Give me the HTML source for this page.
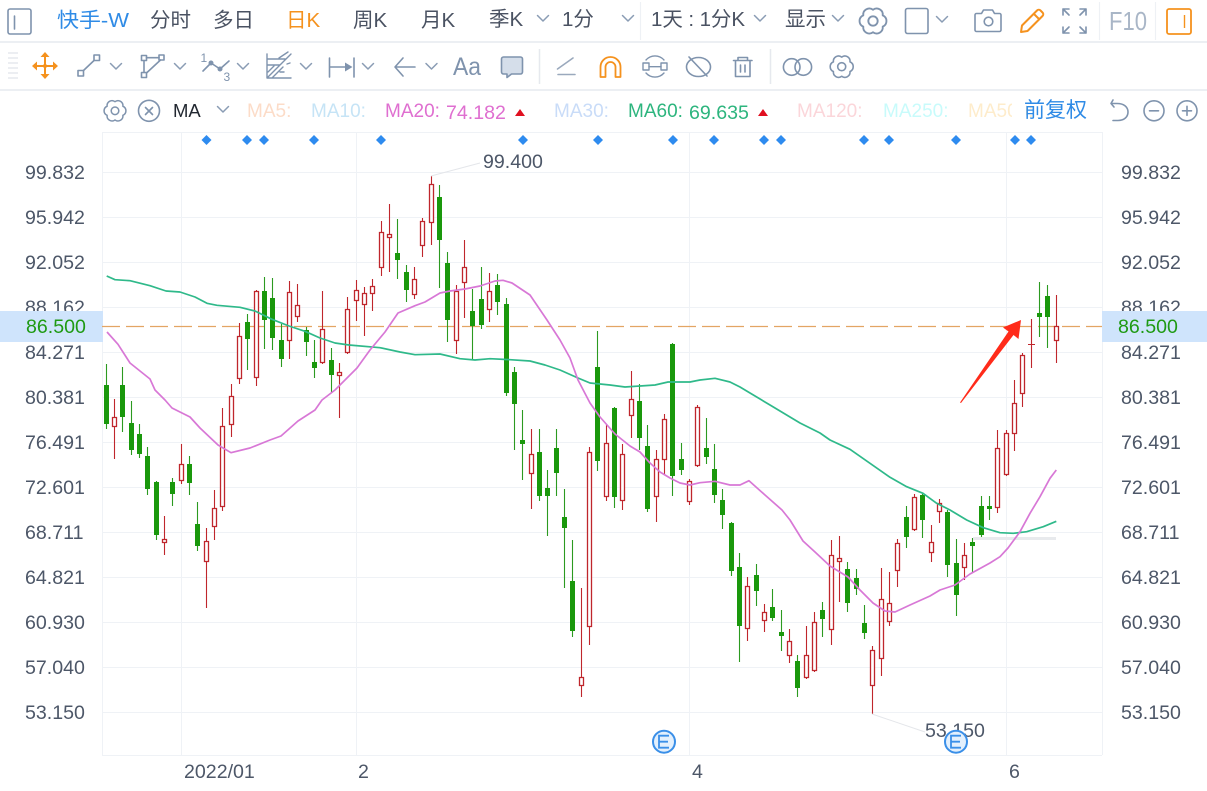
<!DOCTYPE html>
<html><head><meta charset="utf-8"><style>
html,body{margin:0;padding:0;background:#fff;width:1207px;height:791px;overflow:hidden}
svg{display:block;font-family:"Liberation Sans","Noto Sans CJK SC",sans-serif}
.i{fill:none;stroke:#7f93ad;stroke-width:1.6;stroke-linejoin:round;stroke-linecap:round}
.t{font-size:20.5px;fill:#4a5262}
.ax{font-size:19.6px;fill:#4d5768}
.ma{font-size:19px}
</style></head><body>
<svg width="1207" height="791" viewBox="0 0 1207 791" xmlns="http://www.w3.org/2000/svg">
<defs>
<path id="ch" d="M-5.5-2.5L0 3L5.5-2.5" fill="none" stroke="#8a9cb4" stroke-width="1.5" stroke-linecap="round" stroke-linejoin="round"/>
<g id="gear"><path d="M8.3-4.8A5.2 5.2 0 0 1 8.3 4.8A5.2 5.2 0 0 1 0 9.6A5.2 5.2 0 0 1-8.3 4.8A5.2 5.2 0 0 1-8.3-4.8A5.2 5.2 0 0 1 0-9.6A5.2 5.2 0 0 1 8.3-4.8Z"/><circle r="4"/></g>
<polygon id="dm" points="0,-5 5,0 0,5 -5,0" fill="#2e8bef"/>
<g id="ee"><circle r="11" fill="#e3f0fd" stroke="#3a8fe8" stroke-width="2"/><path d="M5-6H-5V6H5M-5 0H4" fill="none" stroke="#3a8fe8" stroke-width="1.8"/></g>
</defs>

<!-- top toolbar -->
<rect x="8" y="9" width="23" height="25" rx="2" class="i"/>
<path d="M14.5 16V29" class="i" stroke-width="1.2"/>
<text x="57" y="27" class="t" style="fill:#2f8be6" textLength="72" lengthAdjust="spacingAndGlyphs">快手-W</text>
<text x="150" y="27" class="t">分时</text>
<text x="213" y="27" class="t">多日</text>
<text x="286" y="27" class="t" style="fill:#f5921e">日K</text>
<text x="353" y="27" class="t">周K</text>
<text x="421" y="27" class="t">月K</text>
<text x="489" y="26" class="t">季K</text>
<use href="#ch" x="543" y="18"/>
<text x="562" y="26" class="t">1分</text>
<use href="#ch" x="628" y="18"/>
<path d="M640.5 2V40M1099.5 2V40M1155.5 2V40" stroke="#eef1f5" stroke-width="1.2"/>
<text x="651" y="26" class="t" textLength="94" lengthAdjust="spacing">1天 : 1分K</text>
<use href="#ch" x="760" y="18"/>
<text x="785" y="26" class="t">显示</text>
<use href="#ch" x="838" y="18"/>
<g class="i" transform="translate(873 21) scale(1.17)"><use href="#gear"/></g>
<rect x="905.5" y="8.5" width="22.5" height="25" rx="2" class="i"/>
<use href="#ch" x="942" y="19"/>
<path d="M976 13.5h5l2-3.5h9l2 3.5h5a1.5 1.5 0 0 1 1.5 1.5v15a1.5 1.5 0 0 1-1.5 1.5h-23a1.5 1.5 0 0 1-1.5-1.500v-15a1.5 1.5 0 0 1 1.5-1.500z" class="i" transform="translate(.5 0)"/>
<circle cx="988.500" cy="21.500" r="4.300" class="i"/>
<path d="M1021 32l1-6.500L1037 10.500c1-1 2.500-1 3.500 0l2 2c1 1 1 2.500 0 3.500L1027.500 31zM1033.500 13.500l6 6" fill="none" stroke="#f5921e" stroke-width="2" stroke-linejoin="round"/>
<path d="M1063 15V9H1069M1063 9l6 6M1086 15V9H1080M1086 9l-6 6M1063 27V33H1069M1063 33l6-6M1086 27V33H1080M1086 33l-6-6" class="i"/>
<text x="1109" y="30" style="font-size:26px;fill:#a9b6c7" textLength="38" lengthAdjust="spacingAndGlyphs">F10</text>
<rect x="1167" y="9" width="24" height="25" rx="2" fill="none" stroke="#f5921e" stroke-width="1.8"/>
<path d="M1184.500 15V28" fill="none" stroke="#f5921e" stroke-width="1.4"/>
<rect x="0" y="41" width="1207" height="2" fill="#eceff3"/>

<!-- second toolbar -->
<path d="M8 53h10M8 58h10M8 63h10M8 68h10M8 73h10M8 78h10" stroke="#e6e9ee" stroke-width="1.5"/>
<g fill="none" stroke="#f5921e" stroke-width="2"><path d="M45 55V77M34 66H56"/></g>
<path d="M45 52l-4.500 5h9zM45 79l-4.500-5h9zM32 66l5-4.500v9zM58 66l-5-4.500v9z" fill="#f5921e"/>
<circle cx="45" cy="66" r="2" fill="#f5921e"/>
<g class="i">
<rect x="78" y="70.500" width="5.500" height="5.500"/><rect x="94" y="55" width="5.500" height="5.500"/><path d="M83.500 70.500L94 60.500"/>
<rect x="141.500" y="55.500" width="5" height="5"/><rect x="159" y="55" width="5" height="5"/><rect x="141.500" y="72.500" width="5" height="5"/><path d="M146.500 57.700H159M144 60.500V72.500M146.500 73L160.500 60"/>
<path d="M203 71L211 63L220 69L229 61"/>
<path d="M267 54V78H291M267 59H285M267 65H280M291 54L267 78M272 78L283 67M274 66L268 72M280 72H284M287 64L290 63M279 58L288 52" stroke-width="1.4"/>
<path d="M329.500 58V77M354 58V77M330 67H346"/>
<path d="M403 58L395 67L403 76M396 67H415"/>
<path d="M557.500 69L573 58M558 74.500H575" stroke="#9aa9bd"/>
<path d="M646 60A12 12 0 0 1 664 60M646 73A12 12 0 0 0 664 73M649 66.700H661" stroke-width="1.4"/>
<rect x="643" y="63" width="6" height="7" stroke-width="1.4"/><rect x="661" y="63" width="6" height="7" stroke-width="1.4"/>
<ellipse cx="698.500" cy="67" rx="12" ry="9.500"/><path d="M689 57L707 76"/>
<path d="M733.500 60.500H752M738 60V57.500H747.500V60M735.500 61V76.500H750V61M740.500 65V72M745 65V72"/>
<circle cx="791.700" cy="67" r="8.300"/><circle cx="803.300" cy="67" r="8.300"/>
<use href="#gear" transform="translate(841.700 66.700)"/>
<circle cx="149" cy="110.800" r="10.500"/><path d="M145.500 107.500L152.500 114.500M152.500 107.500L145.500 114.500"/>
<use href="#gear" transform="translate(115 110.800) scale(.95)"/>
<path d="M1111 103.500H1117C1124 103.500 1128 107 1128 112C1128 117 1124 120.500 1118 120.500H1113M1111 103.500L1113 100M1111 103.500L1114 107"/>
<circle cx="1154" cy="110.800" r="10"/><path d="M1149.500 110.800H1158.500"/>
<circle cx="1187" cy="110.800" r="10"/><path d="M1182.500 110.800H1191.500M1187 106.300V115.300"/>
</g>
<circle cx="211" cy="63" r="2.500" fill="#7f93ad"/><circle cx="220" cy="69" r="2.500" fill="#7f93ad"/>
<text x="200.500" y="62" style="font-size:12px;fill:#7f93ad">1</text>
<text x="223.500" y="81" style="font-size:12px;fill:#7f93ad">3</text>
<path d="M345 62.500L352.500 67L345 71.500z" fill="#7f93ad"/>
<use href="#ch" x="116" y="66"/><use href="#ch" x="180" y="66"/><use href="#ch" x="243" y="66"/><use href="#ch" x="306" y="66"/><use href="#ch" x="368" y="66"/><use href="#ch" x="431.500" y="66"/>
<text x="453" y="75" style="font-size:25px;fill:#7f93ad" textLength="28" lengthAdjust="spacingAndGlyphs">Aa</text>
<path d="M503.500 57h17a2 2 0 0 1 2 2v13a2 2 0 0 1-2 2h-9l-4.500 3.500v-3.500h-3.500a2 2 0 0 1-2-2v-13a2 2 0 0 1 2-2z" fill="#d5deea" stroke="#7f93ad" stroke-width="1.6" stroke-linejoin="round"/>
<path d="M539.500 49V84M770.500 49V84" stroke="#e6e9ee" stroke-width="1.5"/>
<path d="M600.500 77V67a10 10 0 0 1 20 0V77H615.500V67a5 5 0 0 0-10 0V77z" fill="none" stroke="#f5921e" stroke-width="1.800" stroke-linejoin="round"/>
<rect x="0" y="89" width="1207" height="2" fill="#eceff3"/>

<!-- MA row -->
<text x="173" y="117" style="font-size:18.500px;fill:#222831">MA</text>
<use href="#ch" x="223" y="109"/>
<g class="ma">
<text x="247" y="117" fill="#fcdcc8">MA5:</text>
<text x="311" y="117" fill="#c6e4f6">MA10:</text>
<text x="385" y="117" fill="#df6fd0">MA20:</text>
<text x="446" y="119" fill="#df6fd0" style="font-size:19.6px">74.182</text>
<text x="554" y="117" fill="#c9dcf8">MA30:</text>
<text x="628" y="117" fill="#2db57e">MA60:</text>
<text x="689" y="119" fill="#2db57e" style="font-size:19.6px">69.635</text>
<text x="797" y="117" fill="#fbd6da">MA120:</text>
<text x="883" y="117" fill="#c8fbfb">MA250:</text>
<text x="968" y="117" fill="#feeccb">MA500:</text>
</g>
<path d="M515 116l5-7 5 7zM758 116l5-7 5 7z" fill="#e01020"/>
<rect x="1012" y="96" width="14" height="30" fill="#fff"/>
<text x="1024" y="117" style="font-size:21px;fill:#2f8be6">前复权</text>

<!-- chart frame & grid -->
<path d="M102 132.500H1102M102 755.500H1102M102.500 132V755M1102.500 132V755M181.500 132V755M356.500 132V755M689.500 132V755M1006.500 132V755M102 172.500H1102M102 217.500H1102M102 262.500H1102M102 307.500H1102M102 352.500H1102M102 397.500H1102M102 442.500H1102M102 487.500H1102M102 532.500H1102M102 577.500H1102M102 622.500H1102M102 667.500H1102M102 712.500H1102" stroke="#eff2f6" stroke-width="1" fill="none"/>

<!-- diamonds -->
<use href="#dm" x="206.500" y="140"/><use href="#dm" x="247" y="140"/><use href="#dm" x="264" y="140"/><use href="#dm" x="314" y="140"/><use href="#dm" x="381" y="140"/><use href="#dm" x="523" y="140"/><use href="#dm" x="598" y="140"/><use href="#dm" x="673" y="140"/><use href="#dm" x="714" y="140"/><use href="#dm" x="764" y="140"/><use href="#dm" x="781" y="140"/><use href="#dm" x="864" y="140"/><use href="#dm" x="889" y="140"/><use href="#dm" x="956" y="140"/><use href="#dm" x="1015" y="140"/><use href="#dm" x="1031" y="140"/>

<!-- axis labels -->
<g class="ax">
<text x="25" y="179">99.832</text><text x="25" y="224">95.942</text><text x="25" y="269">92.052</text><text x="25" y="314">88.162</text><text x="25" y="359">84.271</text><text x="25" y="404">80.381</text><text x="25" y="449">76.491</text><text x="25" y="494">72.601</text><text x="25" y="539">68.711</text><text x="25" y="584">64.821</text><text x="25" y="629">60.930</text><text x="25" y="674">57.040</text><text x="25" y="719">53.150</text>
<text x="1121" y="179">99.832</text><text x="1121" y="224">95.942</text><text x="1121" y="269">92.052</text><text x="1121" y="314">88.162</text><text x="1121" y="359">84.271</text><text x="1121" y="404">80.381</text><text x="1121" y="449">76.491</text><text x="1121" y="494">72.601</text><text x="1121" y="539">68.711</text><text x="1121" y="584">64.821</text><text x="1121" y="629">60.930</text><text x="1121" y="674">57.040</text><text x="1121" y="719">53.150</text>
<text x="184" y="778">2022/01</text><text x="358" y="778">2</text><text x="692" y="778">4</text><text x="1009" y="778">6</text>
</g>

<!-- price marker boxes -->
<rect x="0" y="311" width="103" height="31" fill="#cfe4fc"/>
<rect x="1102" y="311" width="105" height="31" fill="#cfe4fc"/>
<text x="26" y="333" style="font-size:19.6px;fill:#1f9a14">86.500</text>
<text x="1118" y="333" style="font-size:19.6px;fill:#1f9a14">86.500</text>
<path d="M102 326.500H1102" stroke="#e3a564" stroke-width="1.200" stroke-dasharray="18 6"/>

<!-- green candles: wicks -->
<path fill="none" stroke="#2c9a20" stroke-width="1.100" d="M106.500 364V429M122.500 367V432M131.500 401V455M139.500 424V458M147.500 447V495M156.500 481V540M172.500 478V506M189.500 456V495M197.500 502V551M247.500 314V370M264.500 277V349M272.500 278V350M281.500 324V367M306.500 327V356M314.500 340V378M331.500 348V392M397.500 219V279M406.500 265V302M439.500 185V288M447.500 252V342M472.500 289V359M481.500 267V329M497.500 274V315M506.500 298V396M514.500 367V450M522.500 410V480M539.500 429V501M547.500 470V536M556.500 429V496M564.500 489V588M572.500 540V637M597.500 331V471M614.500 407V508M639.500 384V450M647.500 425V512M672.500 343V496M681.500 443V475M706.500 418V464M714.500 444V503M722.500 489V529M731.500 522V576M739.500 553V662M756.500 564V606M772.500 589V621M781.500 610V651M797.500 655V697M822.500 602V637M847.500 562V612M856.500 569V595M864.500 605V639M906.500 506V548M922.500 494V538M947.500 510V577M956.500 539V616M972.500 538V573M981.500 496V538M989.500 496V520M1039.500 282V337M1047.500 285V348"/>
<!-- green candles: bodies -->
<path fill="#1a980c" d="M104 385h5V424h-5zM120 385h5V417h-5zM129 423h5V450h-5zM137 434h5V454h-5zM145 456h5V489h-5zM154 482h5V535h-5zM170 482h5V494h-5zM187 464h5V483h-5zM195 524h5V546h-5zM245 322h5V339h-5zM262 291h5V320h-5zM270 298h5V338h-5zM279 340h5V359h-5zM304 330h5V342h-5zM312 362h5V368h-5zM329 360h5V375h-5zM395 253h5V260h-5zM404 272h5V290h-5zM437 197h5V240h-5zM445 263h5V320h-5zM470 311h5V326h-5zM479 299h5V325h-5zM495 285h5V302h-5zM504 304h5V393h-5zM512 372h5V404h-5zM520 440h5V444h-5zM537 452h5V496h-5zM545 488h5V496h-5zM554 448h5V473h-5zM562 517h5V528h-5zM570 581h5V631h-5zM595 367h5V461h-5zM612 408h5V497h-5zM637 401h5V438h-5zM645 446h5V509h-5zM670 344h5V476h-5zM679 459h5V470h-5zM704 448h5V457h-5zM712 469h5V495h-5zM720 500h5V515h-5zM729 523h5V571h-5zM737 567h5V626h-5zM754 575h5V591h-5zM770 607h5V618h-5zM779 632h5V636h-5zM795 661h5V688h-5zM820 610h5V619h-5zM845 569h5V603h-5zM854 578h5V589h-5zM862 623h5V633h-5zM904 517h5V537h-5zM920 495h5V520h-5zM945 512h5V565h-5zM954 563h5V595h-5zM970 542h5V546h-5zM979 506h5V535h-5zM987 506h5V509h-5zM1037 313h5V317h-5zM1045 296h5V317h-5z"/>
<!-- red candles: wicks -->
<path fill="none" stroke="#bf262c" stroke-width="1.100" d="M114.500 399V459M164.500 516V555M181.500 444V484M206.500 528V608M214.500 490V540M222.500 408V511M231.500 384V437M239.500 323V384M256.500 290V386M289.500 281V359M297.500 284V322M322.500 291V364M339.500 363V418M347.500 297V354M356.500 280V321M364.500 287V336M372.500 279V311M381.500 221V276M389.500 204V272M414.500 267V299M422.500 218V257M431.500 176V245M456.500 285V354M464.500 240V318M489.500 273V322M531.500 429V509M581.500 588V697M589.500 447V645M606.500 425V501M622.500 444V510M631.500 371V438M656.500 450V522M664.500 414V475M689.500 479V505M697.500 405V467M747.500 577V641M764.500 604V632M789.500 629V663M806.500 626V679M814.500 612V672M831.500 540V645M839.500 536V602M872.500 646V714M881.500 568V676M889.500 572V626M897.500 539V587M914.500 494V531M931.500 525V562M939.500 499V523M964.500 543V580M997.500 430V513M1006.500 430V476M1014.500 380V451M1022.500 353V407M1031.500 319V368M1056.500 295V363M1028 344.500H1035"/>
<!-- red candles: bodies -->
<path fill="#fff" stroke="#bf262c" stroke-width="1.300" d="M112.500 417.500h4V426.500h-4zM162.500 539.500h4V542.500h-4zM179.500 464.500h4V480.500h-4zM204.500 541.500h4V561.500h-4zM212.500 508.500h4V526.500h-4zM220.500 426.500h4V506.500h-4zM229.500 396.500h4V424.500h-4zM237.500 336.500h4V378.500h-4zM254.500 291.500h4V377.500h-4zM287.500 292.500h4V340.500h-4zM295.500 305.500h4V316.500h-4zM320.500 329.500h4V362.500h-4zM337.500 372.500h4V375.500h-4zM345.500 309.500h4V352.500h-4zM354.500 290.500h4V300.500h-4zM362.500 293.500h4V304.500h-4zM370.500 286.500h4V293.500h-4zM379.500 232.500h4V267.500h-4zM387.500 234.500h4V237.500h-4zM412.500 279.500h4V294.500h-4zM420.500 221.500h4V245.500h-4zM429.500 184.500h4V222.500h-4zM454.500 291.500h4V340.500h-4zM462.500 267.500h4V282.500h-4zM487.500 291.500h4V309.500h-4zM529.500 454.500h4V473.500h-4zM579.500 677.500h4V685.500h-4zM587.500 452.500h4V626.500h-4zM604.500 443.500h4V496.500h-4zM620.500 454.500h4V500.500h-4zM629.500 399.500h4V415.500h-4zM654.500 459.500h4V496.500h-4zM662.500 419.500h4V459.500h-4zM687.500 481.500h4V501.500h-4zM695.500 407.500h4V465.500h-4zM745.500 586.500h4V628.500h-4zM762.500 612.500h4V620.500h-4zM787.500 641.500h4V655.500h-4zM804.500 655.500h4V677.500h-4zM812.500 622.500h4V670.500h-4zM829.500 555.500h4V629.500h-4zM837.500 558.500h4V561.500h-4zM870.500 650.500h4V685.500h-4zM879.500 599.500h4V658.500h-4zM887.500 603.500h4V621.500h-4zM895.500 543.500h4V570.500h-4zM912.500 497.500h4V529.500h-4zM929.500 542.500h4V552.500h-4zM937.500 503.500h4V511.500h-4zM962.500 555.500h4V567.500h-4zM995.500 448.500h4V507.500h-4zM1004.500 433.500h4V474.500h-4zM1012.500 403.500h4V433.500h-4zM1020.500 355.500h4V393.500h-4zM1054.500 326.500h4V340.500h-4z"/>

<!-- faint bar -->
<rect x="973" y="537" width="83" height="3" fill="#e8eaed"/>

<!-- MA lines -->
<polyline fill="none" stroke="#2fb98a" stroke-width="1.700" stroke-linejoin="round" points="106.700,276 115,279.700 130,280.700 150,285.700 166,291 180,292 195,297 207,303.300 217,305.300 240,307.300 255,311 272,319.300 289,326 305,331.300 320,338 335,343 349,345 380,347.700 400,352 415,354.700 440,354 460,358.700 475,360 490,358.700 510,359.700 530,361 545,365 560,370 578,378 590,383 610,385 625,387 640,386 655,385 668,382 690,382 700,380 715,378.300 730,382 740,387 750,393 770,405 800,423 820,433 830,440 850,449.300 870,463.300 890,477.300 906.700,486.700 923,493.300 936.700,503.300 950,510 966.700,520 983.300,527.700 1000,532.700 1013.300,533.300 1026.700,531.700 1043.300,526.700 1056.300,521.300"/>
<polyline fill="none" stroke="#d878d6" stroke-width="1.700" stroke-linejoin="round" points="107,332 118,344.300 130,363 150,379 155,390 165,400 172,408 190,417 200,428 218,445 231,452.700 250,448 270,440 281,436 298,421 315,410 322,400 335,390 340,385 357,368 370,350 385,332 398,313 415,305.700 425,302 440,293 450,291 465,289 480,286 495,281 503,280.300 512,283 530,295 547,320 560,340 570,358 578,380 590,403 600,417 615,434 630,446 640,452 650,463 660,472 670,478 680,483 690,485 700,482.700 715,481.300 730,485 740,485 749,480.700 765,495 782,510 790,520 803,541 815,552 830,566 848,577 860,590 873,603 885,611 895,612 910,605 930,596 940,590 955,585 970,574 990,563 1000,556.700 1008,548 1020,531.700 1030,513.300 1040,496.700 1050,478.300 1056.300,470"/>

<!-- red arrow -->
<polygon points="960,402.500 1008.500,331.500 1003,327.500 1021,320 1018.500,339 1013.500,335 961,403" fill="#ff2b1a"/>

<!-- annotations -->
<path d="M431 176L480 163M872 714L925 732" stroke="#e4e6ea" stroke-width="1" fill="none"/>
<text x="483" y="168" class="ax">99.400</text>
<text x="925" y="737" class="ax">53.150</text>
<use href="#ee" x="664" y="741.700"/>
<use href="#ee" x="956" y="741.700"/>
</svg>
</body></html>
